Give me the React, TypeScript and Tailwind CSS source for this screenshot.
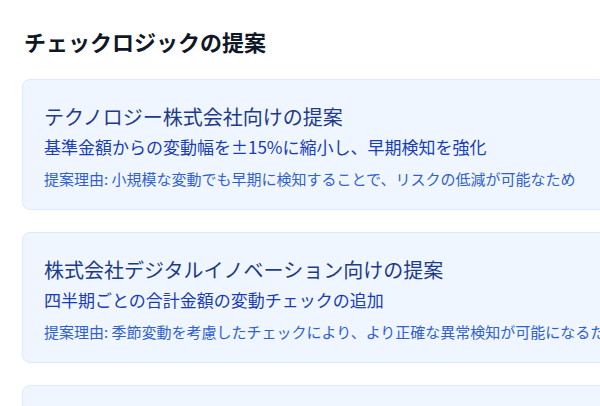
import React from "react";

const items = [
  {
    title: "テクノロジー株式会社向けの提案",
    body: "基準金額からの変動幅を±15%に縮小し、早期検知を強化",
    reason: "提案理由: 小規模な変動でも早期に検知することで、リスクの低減が可能なため",
  },
  {
    title: "株式会社デジタルイノベーション向けの提案",
    body: "四半期ごとの合計金額の変動チェックの追加",
    reason: "提案理由: 季節変動を考慮したチェックにより、より正確な異常検知が可能になるため",
  },
  {
    title: "グローバル商事株式会社向けの提案",
    body: "取引先ごとの支払いパターンの分析を追加",
    reason: "提案理由: 通常とは異なる支払いパターンを検知できるため",
  },
];

export default function App() {
  return (
    <div
      className="w-[600px] h-[406px] overflow-hidden bg-white"
      style={{ fontFamily: '"Noto Sans CJK JP", "Noto Sans", sans-serif' }}
    >
      <div className="w-[700px] pl-[22px] pt-[25px]">
        <h2 className="ml-[2px] text-[22px] leading-[32px] font-bold text-gray-900 whitespace-nowrap">
          チェックロジックの提案
        </h2>
        <div className="mt-[22px] flex flex-col gap-[22px] w-[660px]">
          {items.map((it) => (
            <div
              key={it.title}
              className="rounded-lg border border-blue-100 bg-blue-50 pl-[21px] pt-[23px] pb-[20px] whitespace-nowrap"
            >
              <div className="text-xl leading-7 text-[#1e3a8a]">{it.title}</div>
              <div className="mt-[2px] text-[17px] leading-7 text-blue-800">{it.body}</div>
              <div className="mt-2 text-[15px] leading-5 text-[#2f5fd0]">{it.reason}</div>
            </div>
          ))}
        </div>
      </div>
    </div>
  );
}
